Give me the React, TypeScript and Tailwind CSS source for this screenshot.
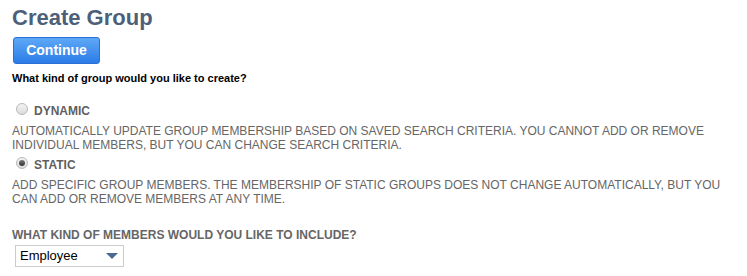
import { useState } from 'react'

type Kind = 'dynamic' | 'static'

function Radio({ checked }: { checked: boolean }) {
  return (
    <span className="-mt-px mr-[6px] flex h-[12px] w-[12px] shrink-0 items-center justify-center rounded-full border border-[#b9b9b9] bg-gradient-to-b from-[#f4f4f4] to-[#dcdcdc]">
      {checked && <span className="h-[6px] w-[6px] rounded-full bg-gradient-to-b from-[#777] to-[#333]" />}
    </span>
  )
}

export default function App() {
  const [kind, setKind] = useState<Kind>('static')

  const options: { id: Kind; label: string; help: string }[] = [
    {
      id: 'dynamic',
      label: 'DYNAMIC',
      help: 'AUTOMATICALLY UPDATE GROUP MEMBERSHIP BASED ON SAVED SEARCH CRITERIA. YOU CANNOT ADD OR REMOVE INDIVIDUAL MEMBERS, BUT YOU CAN CHANGE SEARCH CRITERIA.',
    },
    {
      id: 'static',
      label: 'STATIC',
      help: 'ADD SPECIFIC GROUP MEMBERS. THE MEMBERSHIP OF STATIC GROUPS DOES NOT CHANGE AUTOMATICALLY, BUT YOU CAN ADD OR REMOVE MEMBERS AT ANY TIME.',
    },
  ]

  return (
    <div className="min-h-[276px] bg-white px-3 pt-[5px] font-['Liberation_Sans',Arial,sans-serif]">
      {/* Title */}
      <h1 className="text-[22px] font-bold leading-[25px] text-[#4d5f79]">Create Group</h1>

      <button className="ml-px mt-[7px] flex h-[27px] w-[87px] items-center justify-center rounded-[3px] border border-[#2a6fd6] bg-gradient-to-b from-[#5ea8f7] to-[#2b7ce6] text-[14px] font-bold text-white">
        Continue
      </button>

      <p className="mt-[8px] text-[11px] font-bold leading-[13px] text-black">
        What kind of group would you like to create?
      </p>

      {/* Group type options */}
      <div className="mt-[19px]">
        {options.map((opt, i) => (
          <div key={opt.id} className={i > 0 ? 'mt-[6px]' : ''}>
            <label
              className="ml-[4px] flex cursor-pointer items-start text-[12px] font-bold leading-[14px] text-[#5f5f5f]"
              onClick={() => setKind(opt.id)}
            >
              <Radio checked={kind === opt.id} />
              {opt.label}
            </label>
            <p className="mt-[6px] text-[12px] leading-[14px] text-[#666]">{opt.help}</p>
          </div>
        ))}
      </div>

      <p className="mt-[22px] text-[12px] font-bold leading-[14px] text-[#666]">
        WHAT KIND OF MEMBERS WOULD YOU LIKE TO INCLUDE?
      </p>

      {/* Member type select */}
      <div className="ml-[3px] mt-[3px] flex h-[22px] w-[109px] items-center justify-between border border-[#cccccc] bg-white pl-[4px] pr-[5px]">
        <span className="text-[13px] text-black">Employee</span>
        <svg width="12" height="6" viewBox="0 0 12 6">
          <path d="M0 0 H12 L6 6 Z" fill="#4b6a93" />
        </svg>
      </div>
    </div>
  )
}
